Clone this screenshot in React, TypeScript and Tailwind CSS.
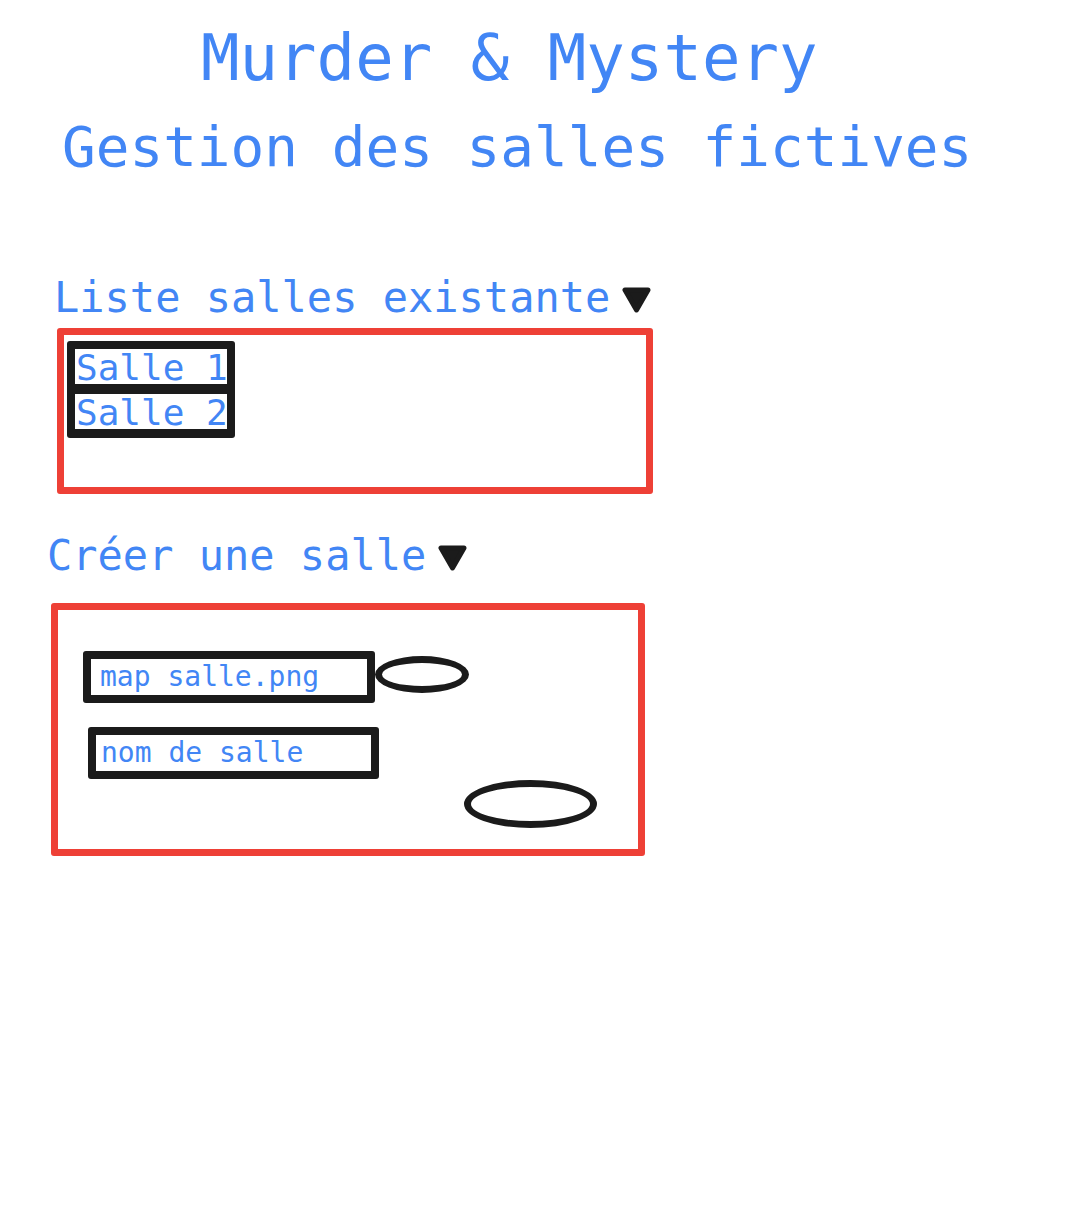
const BLUE = 'text-[#4286f5]';

function Caret({ className }: { className?: string }) {
  return (
    <svg width="29" height="26" viewBox="0 0 29 26" className={className}>
      <polygon
        points="3,3 26,3 14.5,23"
        fill="#1b1b1b"
        stroke="#1b1b1b"
        strokeWidth="5"
        strokeLinejoin="round"
      />
    </svg>
  );
}

function SectionTitle({ label, className }: { label: string; className?: string }) {
  return (
    <div className={`flex items-center gap-[12px] text-[42px] leading-[42px] ${BLUE} ${className ?? ''}`}>
      <span className="whitespace-pre">{label}</span>
      <Caret className="mt-[4px]" />
    </div>
  );
}

function FieldBox({ value, className, pad }: { value: string; className?: string; pad: string }) {
  return (
    <div className={`rounded-[3px] border-[8px] border-[#1b1b1b] bg-white ${className ?? ''}`}>
      <div className={`h-[36px] text-[28px] leading-[36px] whitespace-pre ${pad} ${BLUE}`}>{value}</div>
    </div>
  );
}

export default function App() {
  const salles = ['Salle 1', 'Salle 2'];

  return (
    <div
      className="h-[1220px] w-[1084px] overflow-hidden bg-white"
      style={{ fontFamily: '"DejaVu Sans Mono", "Liberation Mono", monospace' }}
    >
      {/* Header */}
      <h1 className={`ml-[201px] mt-[26px] text-[64px] leading-[64px] font-normal whitespace-pre ${BLUE}`}>Murder & Mystery</h1>
      <h2 className={`ml-[62px] mt-[29px] text-[56px] leading-[56px] font-normal whitespace-pre ${BLUE}`}>Gestion des salles fictives</h2>

      {/* Liste */}
      <SectionTitle label="Liste salles existante" className="ml-[54px] mt-[102px]" />
      <div className="ml-[57px] mt-[9px] h-[166px] w-[596px] rounded-[3px] border-[7px] border-[#ee4036] pl-[3px] pt-[6px]">
        <div className="flex w-[168px] flex-col gap-[10px] rounded-[3px] bg-[#1b1b1b] p-[8px] pb-[9px]">
          {salles.map((s) => (
            <div key={s} className={`h-[35px] w-[152px] bg-white pl-[1px] text-[36px] leading-[39px] whitespace-pre ${BLUE}`}>
              <div className="-mt-[1px] h-[35px] overflow-visible">{s}</div>
            </div>
          ))}
        </div>
      </div>

      {/* Création */}
      <SectionTitle label="Créer une salle" className="ml-[47px] mt-[41px]" />
      <div className="ml-[51px] mt-[26px] h-[253px] w-[594px] rounded-[3px] border-[7px] border-[#ee4036]">
        <div className="ml-[25px] mt-[41px] flex items-start">
          <FieldBox value="map salle.png" pad="pl-[9px]" className="w-[292px]" />
          <button className="mt-[5px] h-[37px] w-[94px] rounded-[50%] border-[7px] border-[#1b1b1b] bg-white" />
        </div>
        <FieldBox value="nom de salle" pad="pl-[5px]" className="ml-[30px] mt-[24px] w-[291px]" />
        <button className="ml-[406px] mt-[1px] block h-[48px] w-[133px] rounded-[50%] border-[7px] border-[#1b1b1b] bg-white" />
      </div>
    </div>
  );
}
